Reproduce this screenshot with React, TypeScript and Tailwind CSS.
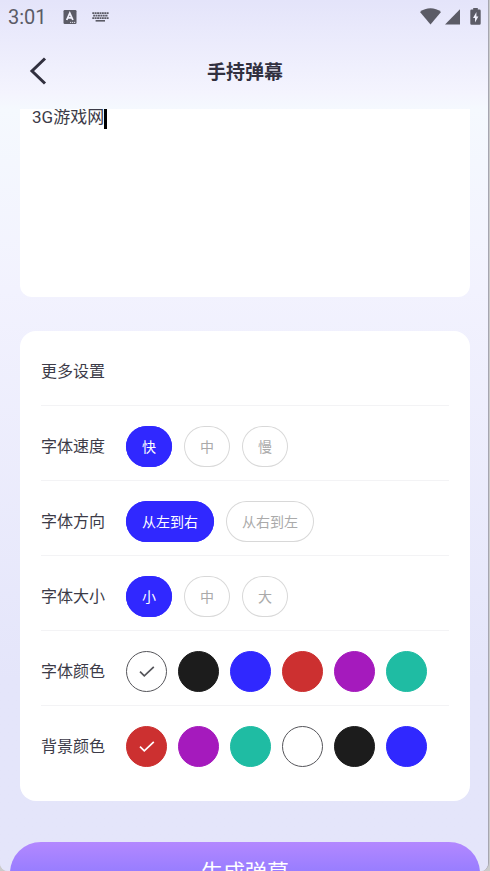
import { useState } from "react";

interface Swatch {
  name: string;
  fill: string;
  check: string;
}

interface RowProps {
  label: string;
  last?: boolean;
  children?: React.ReactNode;
}

interface GroupProps {
  name: string;
  initial: string;
  options: string[];
}

const swatches: Record<string, Swatch> = {
  white: { name: "白色", fill: "bg-white border-[#55555a]", check: "text-[#55555a]" },
  black: { name: "黑色", fill: "bg-[#1c1c1c] border-[#1c1c1c]", check: "text-white" },
  blue: { name: "蓝色", fill: "bg-[#3028ff] border-[#3028ff]", check: "text-white" },
  red: { name: "红色", fill: "bg-[#cc3030] border-[#cc3030]", check: "text-white" },
  purple: { name: "紫色", fill: "bg-[#a51abd] border-[#a51abd]", check: "text-white" },
  teal: { name: "青色", fill: "bg-[#1fbca3] border-[#1fbca3]", check: "text-white" },
};

const fontColors = ["white", "black", "blue", "red", "purple", "teal"];
const backColors = ["red", "purple", "teal", "white", "black", "blue"];

const Row = ({ label, last, children }: RowProps) => (
  <div
    role={children ? "radiogroup" : undefined}
    aria-label={children ? label : undefined}
    className={
      "flex items-center gap-5 pt-5 " + (last ? "" : "border-b border-[#f3f3f5] pb-[13px]")
    }
  >
    <p className="flex h-[41px] w-[65px] shrink-0 items-center whitespace-nowrap text-base text-[#3c3b48]">
      {label}
    </p>
    {children}
  </div>
);

const Pills = ({ name, initial, options }: GroupProps) => {
  const [value, setValue] = useState<string>(initial);
  return (
    <div className="flex gap-3">
      {options.map((option) => (
        <label key={option} className="relative cursor-pointer">
          <input
            type="radio"
            name={name}
            className="peer sr-only"
            checked={value === option}
            onChange={() => setValue(option)}
          />
          <span className="flex h-[41px] items-center rounded-full px-4 text-sm text-[#aaaaaa] inset-ring inset-ring-[#d8d8d8] peer-checked:bg-[#3028ff] peer-checked:text-white peer-checked:inset-ring-[#3028ff]">
            {option}
          </span>
        </label>
      ))}
    </div>
  );
};

const Colors = ({ name, initial, options }: GroupProps) => {
  const [value, setValue] = useState<string>(initial);
  return (
    <div className="flex gap-[11px]">
      {options.map((key) => (
        <label key={key} className="relative cursor-pointer">
          <input
            type="radio"
            name={name}
            aria-label={swatches[key].name}
            className="sr-only"
            checked={value === key}
            onChange={() => setValue(key)}
          />
          <span
            className={
              "flex size-[41px] items-center justify-center rounded-full border " +
              swatches[key].fill
            }
          >
            {value === key && (
              <svg
                viewBox="0 0 16 12"
                className={"h-3 w-4 " + swatches[key].check}
                fill="none"
                stroke="currentColor"
                strokeWidth="1.7"
              >
                <path d="M1 5.6 5.3 9.9 14.8 0.9" />
              </svg>
            )}
          </span>
        </label>
      ))}
    </div>
  );
};

const StatusBar = () => (
  <div className="flex h-[34px] items-center justify-between pl-2 pr-[7px] text-[#5b5b66]">
    <div className="flex items-center">
      <span className="w-[55px] text-xl font-normal">3:01</span>
      <svg viewBox="0 0 14 15" className="h-[15px] w-[14px]">
        <rect x="0.5" y="0" width="13" height="14" rx="1.2" fill="#5b5b66" />
        <path d="M3.7 10 6.8 3.2 9.9 10M4.8 7.8H8.8" fill="none" stroke="#f1f1fc" strokeWidth="1.8" />
        <path d="M7 12.4H12.4" stroke="#f1f1fc" strokeWidth="0.9" strokeDasharray="1.2 0.8" />
      </svg>
      <svg viewBox="0 0 17 10" className="ml-[15px] h-[10px] w-[17px]" stroke="#5b5b66" fill="none">
        <path d="M0.3 1.2H17M0.3 6.2H17" strokeWidth="1.8" strokeDasharray="1.9 0.5" />
        <path d="M1.2 3.7H16" strokeWidth="1.8" strokeDasharray="1.9 0.5" />
        <path d="M3.6 8.8H13" strokeWidth="1.6" />
      </svg>
    </div>
    <svg viewBox="0 0 61 18" className="h-[18px] w-[61px]" fill="#5b5b66">
      <path d="M0 3.9C6-0.9 15-0.9 21 3.9L10.5 16.6Z" />
      <path d="M40 1.2V16.6H25Z" />
      <path d="M53.2 0h4.6v1.5h1.7a1.2 1.2 0 0 1 1.2 1.2v12.8a1.2 1.2 0 0 1-1.2 1.2h-8a1.2 1.2 0 0 1-1.2-1.2V2.7a1.2 1.2 0 0 1 1.2-1.2h1.7Z" />
      <path d="M56.4 4 53 10h2v4.6l3.4-6.2h-2Z" fill="#f1f1fc" />
    </svg>
  </div>
);

export default function App() {
  const [text, setText] = useState<string>("3G游戏网");
  return (
    <div className="relative h-screen overflow-hidden bg-[#cbcbcb] pr-px font-[Roboto,'Noto_Sans_CJK_SC',sans-serif] text-[#31303f]">
      <div className="flex h-full flex-col overflow-hidden rounded-b-lg border-r border-[#a6a6b0] bg-[#e4e5fa]">
        <div className="shrink-0 bg-linear-to-b from-[#e4e4fa] via-[#f4f4fe] via-85% to-[#f5f9fe]">
          <StatusBar />
          <header className="grid h-[75px] grid-cols-[1fr_auto_1fr] items-center pl-[26px]">
            <button type="button" aria-label="返回" className="w-6">
              <svg
                viewBox="0 0 24 30"
                className="h-[30px] w-6"
                fill="none"
                stroke="currentColor"
                strokeWidth="3"
              >
                <path d="M19 1.5 6 14 19 26.5" />
              </svg>
            </button>
            <h1 className="pr-6 pt-1 text-[19px] font-bold">手持弹幕</h1>
          </header>
        </div>

        <main className="min-h-0 flex-1 overflow-hidden bg-linear-to-b from-[#f5f9fe] via-[#f2f2fe] via-24% to-[#e4e5fa] to-75%">
          <div className="relative ml-5 mr-[18px]">
            <textarea
              aria-label="弹幕内容"
              value={text}
              onChange={(e) => setText(e.target.value)}
              className="block h-[188px] w-full resize-none rounded-b-xl bg-white px-3 text-[17px] leading-4 text-[#3c3b48] outline-none"
            />
            <span className="absolute left-[84px] top-0 h-5 w-[3px] bg-black" />
          </div>

          <section className="ml-5 mr-[18px] mt-[34px] rounded-2xl bg-white px-[21px] pb-[34px]">
            <Row label="更多设置" />
            <Row label="字体速度">
              <Pills name="speed" initial="快" options={["快", "中", "慢"]} />
            </Row>
            <Row label="字体方向">
              <Pills name="direction" initial="从左到右" options={["从左到右", "从右到左"]} />
            </Row>
            <Row label="字体大小">
              <Pills name="size" initial="小" options={["小", "中", "大"]} />
            </Row>
            <Row label="字体颜色">
              <Colors name="color" initial="white" options={fontColors} />
            </Row>
            <Row label="背景颜色" last>
              <Colors name="background" initial="red" options={backColors} />
            </Row>
          </section>

          <div className="mt-[41px] pl-[10px] pr-2">
            <button
              type="button"
              className="h-[62px] w-full rounded-full bg-linear-to-b from-[#b388ff] to-[#7a70ff] text-[22px] leading-6 text-white"
            >
              生成弹幕
            </button>
          </div>
        </main>
      </div>
    </div>
  );
}
